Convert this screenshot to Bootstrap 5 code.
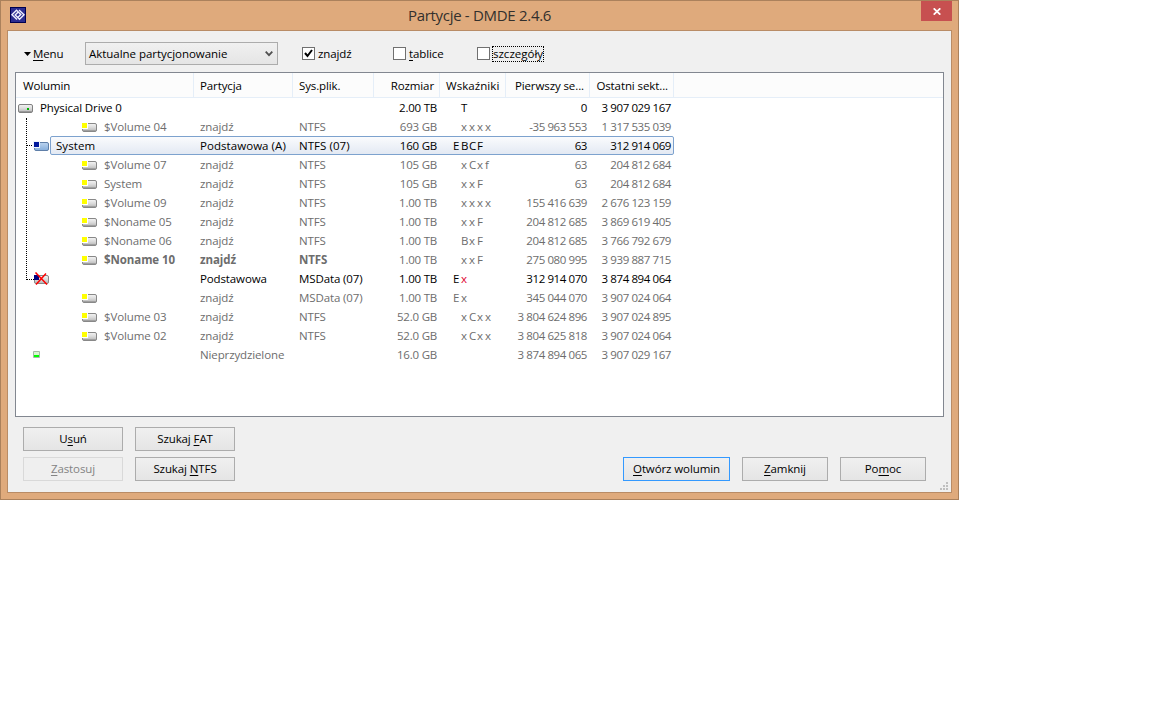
<!DOCTYPE html>
<html lang="pl">
<head>
<meta charset="utf-8">
<title>Partycje - DMDE 2.4.6</title>
<link href="https://cdn.jsdelivr.net/npm/bootstrap@5.3.0/dist/css/bootstrap.min.css" rel="stylesheet">
<script src="https://cdn.jsdelivr.net/npm/bootstrap@5.3.0/dist/js/bootstrap.bundle.min.js" defer></script>
<style>
body{background:#fff;color:#000;font:11.5px/19px "Open Sans","Noto Sans",sans-serif;letter-spacing:-.12px}
u{text-underline-offset:2px;text-decoration-thickness:1px}
.win{width:959px;height:500px;background:#dfaa7c;border:1px solid #ab815c;padding:0 6px 6px}
.titlebar{height:29px}
.appicon{left:3px;top:6px}
.caption{font-size:15px;color:#33302d;letter-spacing:-.3px}
.closer{left:914px;top:0;width:31px;height:20px;background:#c75050;border:0;padding:0}
.client{height:463px;background:#f0f0f0;border:1px solid #b98c66;padding:11px 7px 0}
.tools{height:23px;padding-left:9px;line-height:17px}
.menutext{width:31px;margin-left:2px}
.combo{width:193px;height:23px;border:1px solid #acacac;background:linear-gradient(#f0f0f0,#e5e5e5);padding:0 4px 0 3px;margin:0 24px 0 21px}
.combo span{letter-spacing:-.04px}
.opt1{width:91px}
.opt2{width:84px}
.cbx{width:13px;height:13px;border:1px solid #707070;background:#fff;margin-right:3px}
.focused{outline:1px dotted #000;line-height:14px;white-space:nowrap;letter-spacing:0}
.listbox{width:929px;height:345px;margin-top:7px;background:#fff;border:1px solid #828790}
.vrow{display:grid;grid-template-columns:178px 99px 81px 66px 66px 84px 84px;height:19px;white-space:nowrap}
.vrow>*{padding-left:6px}
.num{text-align:right;padding-right:3px}
.hrow{height:25px;background:#fcfcfc;border-bottom:1px solid #e5eef8;line-height:25px}
.hrow .vrow{height:24px}
.hrow .vrow>*{border-right:1px solid #e5eef8}
.hrow .vrow>:first-child{padding-left:7px}
.hrow .num{padding-right:5px;letter-spacing:-.1px}
.dim{color:#6d6d6d}
.heavy{font-weight:700;letter-spacing:-.08px}
.wider{letter-spacing:.06px}
.digits{letter-spacing:-.41px}
.sizecol{letter-spacing:-.22px}
.flags span{width:8px}
.flags{padding-left:13px;letter-spacing:0}
.hot{color:#e00030}
.vrow>.name{padding-left:0}
.low{margin-top:1px}
.picked{width:624px;height:19px;left:34px;top:0;border:1px solid #7da2ce;border-radius:2px;background:linear-gradient(#fafbfd,#e3e9f3)}
.tree{left:10px;top:20px;width:8px;height:162px;border-left:1px dotted #000;border-bottom:1px dotted #000}
.twig{left:10px;width:8px;top:9px;border-top:1px dotted #000}
.btn.push{--bs-btn-border-radius:0;height:24px;padding:0 0 1px;font-size:11.5px;line-height:21px;letter-spacing:-.1px;color:#000;border:1px solid #acacac;background:linear-gradient(#f0f0f0,#e5e5e5);width:100px}
.btn.push.w1{width:107px;border-color:#3399ff}
.btn.push.w2{width:86px}
.btn.push:disabled{color:#838383;border-color:#d9d9d9;background:#efefef;opacity:1}
.foot{padding:10px 18px 0 8px}
.leftset{display:grid;grid-template-columns:100px 100px;gap:6px 12px}
.rightset{gap:12px}
.grip{right:3px;bottom:2px}
svg{display:block;flex:none}
</style>
</head>
<body>
<svg width="0" height="0" class="position-absolute">
<defs>
<linearGradient id="g" x2="0" y2="1"><stop offset="0" stop-color="#f5f5f5"/><stop offset=".5" stop-color="#dadada"/><stop offset="1" stop-color="#b4b4b4"/></linearGradient>
<linearGradient id="b" x2="0" y2="1"><stop offset="0" stop-color="#bcd4ef"/><stop offset="1" stop-color="#86aedb"/></linearGradient>
<symbol id="drive" viewBox="0 0 15 9"><rect x=".5" y=".5" width="14" height="8" rx="1.5" fill="url(#g)" stroke="#808080"/><path d="M1 7.5h13" stroke="#999"/><path d="M9 4h2v2H9z" fill="#00b400"/></symbol>
<symbol id="vol" viewBox="0 0 15 9"><rect x=".5" y=".5" width="14" height="8" rx="1.5" fill="url(#g)" stroke="#888"/><path d="M1 7.5h13" stroke="#a0a0a0"/><path d="M0 0h6v6H0z" fill="#fff"/><path d="M0 0h5v5H0z" fill="#ff0"/></symbol>
<symbol id="sys" viewBox="0 0 16 10"><rect x="1.500" y="1.500" width="14" height="8" rx="1.500" fill="url(#b)" stroke="#5f7fa8"/><path d="M0 0h7v7H0z" fill="#eef4fb"/><path d="M1 1h5v5H1z" fill="#00189c"/></symbol>
<symbol id="gone" viewBox="0 0 16 13"><rect x="1.500" y="3.500" width="14" height="8" rx="1.500" fill="url(#g)" stroke="#888"/><path d="M1 3h5v5H1z" fill="#000080"/><path d="M2.500 .5l11.500 12M13 1.500L3 12.500" stroke="#f00" stroke-width="1.500"/></symbol>
<symbol id="free" viewBox="0 0 7 7"><path d="M.5.5h6v6h-6z" fill="#d8f8d0" stroke="#a8b8a8"/><path d="M1 4h5v2H1z" fill="#0f0"/></symbol>
</defs>
</svg>
<main class="win position-relative">
<header class="titlebar position-relative d-flex justify-content-center align-items-center">
<svg class="appicon position-absolute" width="16" height="16" viewBox="0 0 16 16"><path d="M0 0h16v16H0z" fill="#000050"/><path d="M1 1h14v14H1z" fill="#2c2c90"/><path d="M7 12.500L2 7.800 6.500 3.300l4.300 4.200L8 10.300M9 3l5 4.700-4.500 4.500L5.200 8 8 5.200" fill="none" stroke="#f0f0ff" stroke-width="1.400"/></svg>
<span class="caption">Partycje - DMDE 2.4.6</span>
<button class="closer position-absolute d-flex justify-content-center align-items-center" aria-label="Zamknij"><svg width="8" height="7" viewBox="0 0 8 7"><path d="M.7.3l6.600 6.400M7.300.3L.7 6.700" stroke="#fff" stroke-width="1.700"/></svg></button>
</header>
<section class="client position-relative">
<div class="tools d-flex align-items-center">
<svg width="7" height="4" viewBox="0 0 7 4"><path d="M0 0h7L3.500 4z"/></svg><span class="menutext"><u>M</u>enu</span>
<div class="combo d-flex align-items-center justify-content-between"><span>Aktualne partycjonowanie</span><svg width="8" height="6" viewBox="0 0 8 6"><path d="M.7.7L4 4.200 7.300.7" fill="none" stroke="#505050" stroke-width="1.800"/></svg></div>
<label class="opt1 d-flex align-items-center"><span class="cbx"><svg width="11" height="11" viewBox="0 0 11 11"><path d="M2 5l2.500 3L9 2" fill="none" stroke="#000" stroke-width="2"/></svg></span><span>znajdź</span></label>
<label class="opt2 d-flex align-items-center"><span class="cbx"></span><span><u>t</u>ablice</span></label>
<label class="d-flex align-items-center"><span class="cbx"></span><span class="focused">szcze<u>g</u>óły</span></label>
</div>
<div class="listbox">
<div class="hrow"><div class="vrow"><span>Wolumin</span><span>Partycja</span><span>Sys.plik.</span><span class="num">Rozmiar</span><span class="wider">Wskaźniki</span><span class="num">Pierwszy se...</span><span class="num">Ostatni sekt...</span></div></div>
<div id="rows" class="position-relative"><div class="tree position-absolute"></div></div>
</div>
<div class="foot d-flex justify-content-between align-items-end">
<div class="leftset"><button class="btn push">U<u>s</u>uń</button><button class="btn push">Szukaj <u>F</u>AT</button><button class="btn push" disabled><u>Z</u>astosuj</button><button class="btn push">Szukaj <u>N</u>TFS</button></div>
<div class="d-flex rightset"><button class="btn push w1"><u>O</u>twórz wolumin</button><button class="btn push w2"><u>Z</u>amknij</button><button class="btn push w2">Po<u>m</u>oc</button></div>
</div>
<svg class="grip position-absolute" width="8" height="8" viewBox="0 0 8 8"><path d="M6 0h2v2H6zM3 3h2v2H3zM6 3h2v2H6zM0 6h2v2H0zM3 6h2v2H3zM6 6h2v2H6z" fill="#bfbfbf"/></svg>
</section>
</main>
<script>
// icon, name, partition, file system, size, indicator slots, first sector, last sector, style
const rows=[
["drive","Physical Drive 0","","","2.00 TB"," T","0","3 907 029 167",""],
["vol","$Volume 04","znajdź","NTFS","693 GB"," xxxx","-35 963 553","1 317 535 039","dim"],
["sys","System","Podstawowa (A)","NTFS (07)","160 GB","EBCF","63","312 914 069","wider"],
["vol","$Volume 07","znajdź","NTFS","105 GB"," xCxf","63","204 812 684","dim"],
["vol","System","znajdź","NTFS","105 GB"," xxF","63","204 812 684","dim"],
["vol","$Volume 09","znajdź","NTFS","1.00 TB"," xxxx","155 416 639","2 676 123 159","dim"],
["vol","$Noname 05","znajdź","NTFS","1.00 TB"," xxF","204 812 685","3 869 619 405","dim"],
["vol","$Noname 06","znajdź","NTFS","1.00 TB"," BxF","204 812 685","3 766 792 679","dim"],
["vol","$Noname 10","znajdź","NTFS","1.00 TB"," xxF","275 080 995","3 939 887 715","dim heavyrow"],
["gone","","Podstawowa","MSData (07)","1.00 TB","E!","312 914 070","3 874 894 064",""],
["vol","","znajdź","MSData (07)","1.00 TB","Ex","345 044 070","3 907 024 064","dim"],
["vol","$Volume 03","znajdź","NTFS","52.0 GB"," xCxx","3 804 624 896","3 907 024 895","dim"],
["vol","$Volume 02","znajdź","NTFS","52.0 GB"," xCxx","3 804 625 818","3 907 024 064","dim"],
["free","","Nieprzydzielone","","16.0 GB","","3 874 894 065","3 907 029 167","dim"]];
// width, height, indent and text start of each icon
const size={drive:[15,9,2,24],vol:[15,9,66,88],sys:[16,10,17,40],gone:[16,13,17,40],free:[7,7,17,40]};
document.getElementById("rows").insertAdjacentHTML("beforeend",rows.map(([i,n,p,f,s,k,a,z,c])=>{
const [w,h,x,t]=size[i],hv=c.includes("heavy")?"heavy":"",low=/drive|vol|sys/.test(i)?"low":"";
return `<div class="position-relative">${i=="sys"?'<div class="picked position-absolute"></div><div class="twig position-absolute"></div>':""}<div class="vrow position-relative ${c}"><div class="name d-flex align-items-center" style="padding-left:${x}px"><svg class="${low}" width="${w}" height="${h}"><use href="#${i}"/></svg><span class="${hv}" style="margin-left:${t-x-w}px">${n}</span></div><span class="${hv}">${p}</span><span class="${hv}">${f}</span><span class="num sizecol">${s}</span><div class="flags d-flex">${[...k].map(q=>q=="!"?'<span class="hot">x</span>':`<span>${q}</span>`).join("")}</div><span class="num digits">${a}</span><span class="num digits">${z}</span></div></div>`}).join(""));
</script>
</body>
</html>
